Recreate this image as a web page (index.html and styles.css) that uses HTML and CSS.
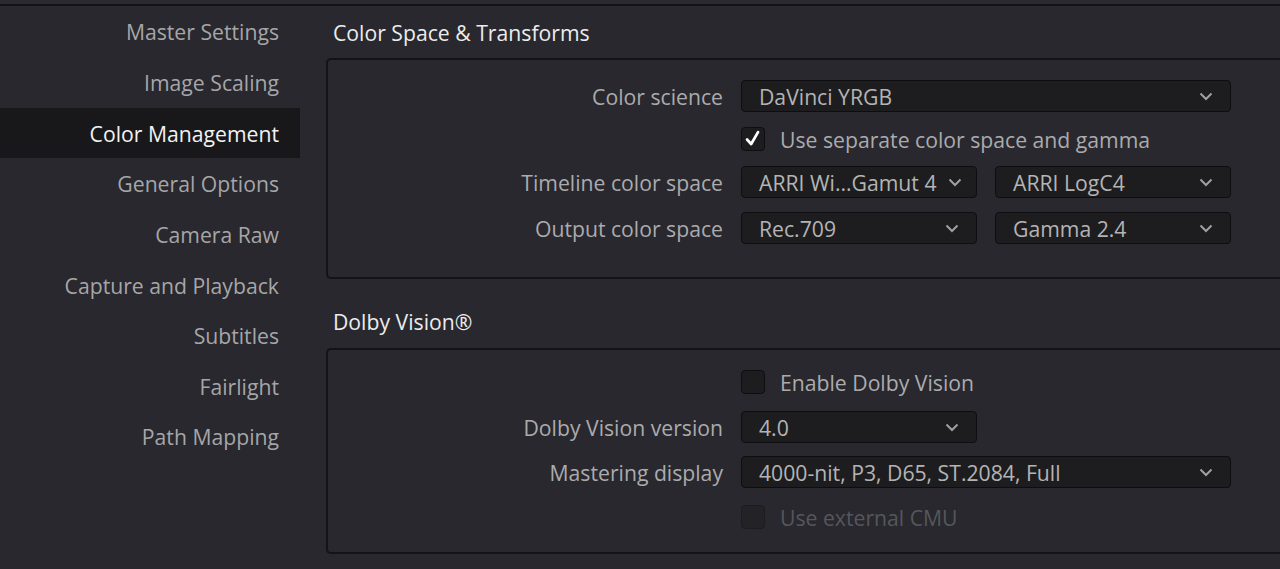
FILE: index.html
```html
<!DOCTYPE html>
<html>
<head>
<meta charset="utf-8">
<link rel="stylesheet" href="styles.css">
</head>
<body>
<div class="topbar"></div>
<div class="layout">
  <nav class="sidebar">
    <div class="nav-item">Master Settings</div>
    <div class="nav-item">Image Scaling</div>
    <div class="nav-item active">Color Management</div>
    <div class="nav-item">General Options</div>
    <div class="nav-item">Camera Raw</div>
    <div class="nav-item">Capture and Playback</div>
    <div class="nav-item">Subtitles</div>
    <div class="nav-item">Fairlight</div>
    <div class="nav-item">Path Mapping</div>
  </nav>
  <main class="main">
    <h2 class="section-title">Color Space &amp; Transforms</h2>
    <section class="group group-cs">
      <div class="row">
        <label class="label">Color science</label>
        <div class="select wide"><span>DaVinci YRGB</span><svg class="chev" viewBox="0 0 14 9"><path d="M1.5 1.5 L7 7 L12.5 1.5"/></svg></div>
      </div>
      <div class="row">
        <span class="label"></span>
        <div class="check-wrap wide">
          <span class="checkbox"><svg viewBox="0 0 24 24"><path class="tick" d="M5.5 12.5 L10 17.5 L17.5 4.5"/></svg></span>
          <span class="check-text">Use separate color space and gamma</span>
        </div>
      </div>
      <div class="row">
        <label class="label">Timeline color space</label>
        <div class="select narrow"><span>ARRI Wi...Gamut 4</span><svg class="chev" viewBox="0 0 14 9"><path d="M1.5 1.5 L7 7 L12.5 1.5"/></svg></div>
        <div class="select"><span>ARRI LogC4</span><svg class="chev" viewBox="0 0 14 9"><path d="M1.5 1.5 L7 7 L12.5 1.5"/></svg></div>
      </div>
      <div class="row row-last">
        <label class="label">Output color space</label>
        <div class="select"><span>Rec.709</span><svg class="chev" viewBox="0 0 14 9"><path d="M1.5 1.5 L7 7 L12.5 1.5"/></svg></div>
        <div class="select"><span>Gamma 2.4</span><svg class="chev" viewBox="0 0 14 9"><path d="M1.5 1.5 L7 7 L12.5 1.5"/></svg></div>
      </div>
    </section>

    <h2 class="section-title second">Dolby Vision®</h2>
    <section class="group group-dv">
      <div class="row">
        <span class="label"></span>
        <div class="check-wrap wide">
          <span class="checkbox"></span>
          <span class="check-text">Enable Dolby Vision</span>
        </div>
      </div>
      <div class="row">
        <label class="label">Dolby Vision version</label>
        <div class="select"><span>4.0</span><svg class="chev" viewBox="0 0 14 9"><path d="M1.5 1.5 L7 7 L12.5 1.5"/></svg></div>
      </div>
      <div class="row">
        <label class="label">Mastering display</label>
        <div class="select wide"><span>4000-nit, P3, D65, ST.2084, Full</span><svg class="chev" viewBox="0 0 14 9"><path d="M1.5 1.5 L7 7 L12.5 1.5"/></svg></div>
      </div>
      <div class="row">
        <span class="label"></span>
        <div class="check-wrap wide disabled">
          <span class="checkbox"></span>
          <span class="check-text">Use external CMU</span>
        </div>
      </div>
    </section>
  </main>
</div>
</body>
</html>
```

FILE: styles.css
```css
* { box-sizing: border-box; }

html, body {
  margin: 0;
  padding: 0;
  height: 100%;
  overflow: hidden;
}

body {
  background: #28282e;
  font-family: "Open Sans", "Noto Sans", "Liberation Sans", sans-serif;
  font-size: 21.2px;
  color: #aeaeae;
}

.topbar {
  height: 6px;
  background: #2a2a30;
  border-bottom: 2px solid #141416;
}

.layout {
  display: flex;
}

.sidebar {
  width: 300px;
  flex: 0 0 300px;
  display: flex;
  flex-direction: column;
  padding-top: 0.5px;
}

.nav-item {
  height: 50.65px;
  display: flex;
  align-items: center;
  justify-content: flex-end;
  padding-right: 21px;
  color: #a6a6a8;
  white-space: nowrap;
}

.nav-item.active {
  background: #18181b;
  color: #f2f2f2;
}

.main {
  flex: 1;
  padding-left: 26px;
  min-width: 0;
}

.section-title {
  margin: 0;
  height: 52px;
  display: flex;
  align-items: center;
  padding-left: 7px;
  font-size: 21.2px;
  font-weight: 400;
  color: #ececec;
  white-space: nowrap;
}

.section-title.second {
  margin-top: 16px;
  height: 53px;
}

.group {
  border: 2px solid #141416;
  border-right: none;
  border-radius: 5px 0 0 5px;
  display: flex;
  flex-direction: column;
}

.group-cs {
  height: 221px;
  padding-top: 20px;
  gap: 11px;
}

.group-dv {
  height: 206px;
  padding-top: 16px;
  gap: 13px;
}

.row {
  display: grid;
  grid-template-columns: 395px 236px 236px;
  column-gap: 18px;
  height: 32px;
  align-items: center;
}

.group-cs .row-last { margin-top: 3px; }

.label {
  text-align: right;
  color: #ababad;
  white-space: nowrap;
}

.select {
  height: 32px;
  background: #1d1d20;
  border: 1px solid #0e0e10;
  border-radius: 4px;
  display: flex;
  align-items: center;
  justify-content: space-between;
  padding: 0 17px 0 17px;
  color: #b4b4b4;
  white-space: nowrap;
}

.select.narrow { padding-right: 14px; }

.select.wide,
.check-wrap.wide {
  grid-column: 2 / 4;
}

.chev {
  width: 14px;
  height: 9px;
  flex: 0 0 14px;
}

.chev path {
  fill: none;
  stroke: #a0a0a2;
  stroke-width: 2;
}

.check-wrap {
  display: flex;
  align-items: center;
  gap: 15px;
}

.checkbox {
  width: 24px;
  height: 24px;
  border-radius: 4px;
  background: #1d1d20;
  border: 1px solid #0e0e10;
  display: flex;
}

.checkbox svg {
  width: 22px;
  height: 22px;
}

.tick {
  fill: none;
  stroke: #ffffff;
  stroke-width: 3;
  stroke-linecap: round;
  stroke-linejoin: round;
}

.check-text {
  color: #ababad;
  white-space: nowrap;
}

.check-wrap.disabled .checkbox {
  background: #232327;
  border-color: #1c1c1f;
}

.check-wrap.disabled .check-text {
  color: #56565c;
}
```
